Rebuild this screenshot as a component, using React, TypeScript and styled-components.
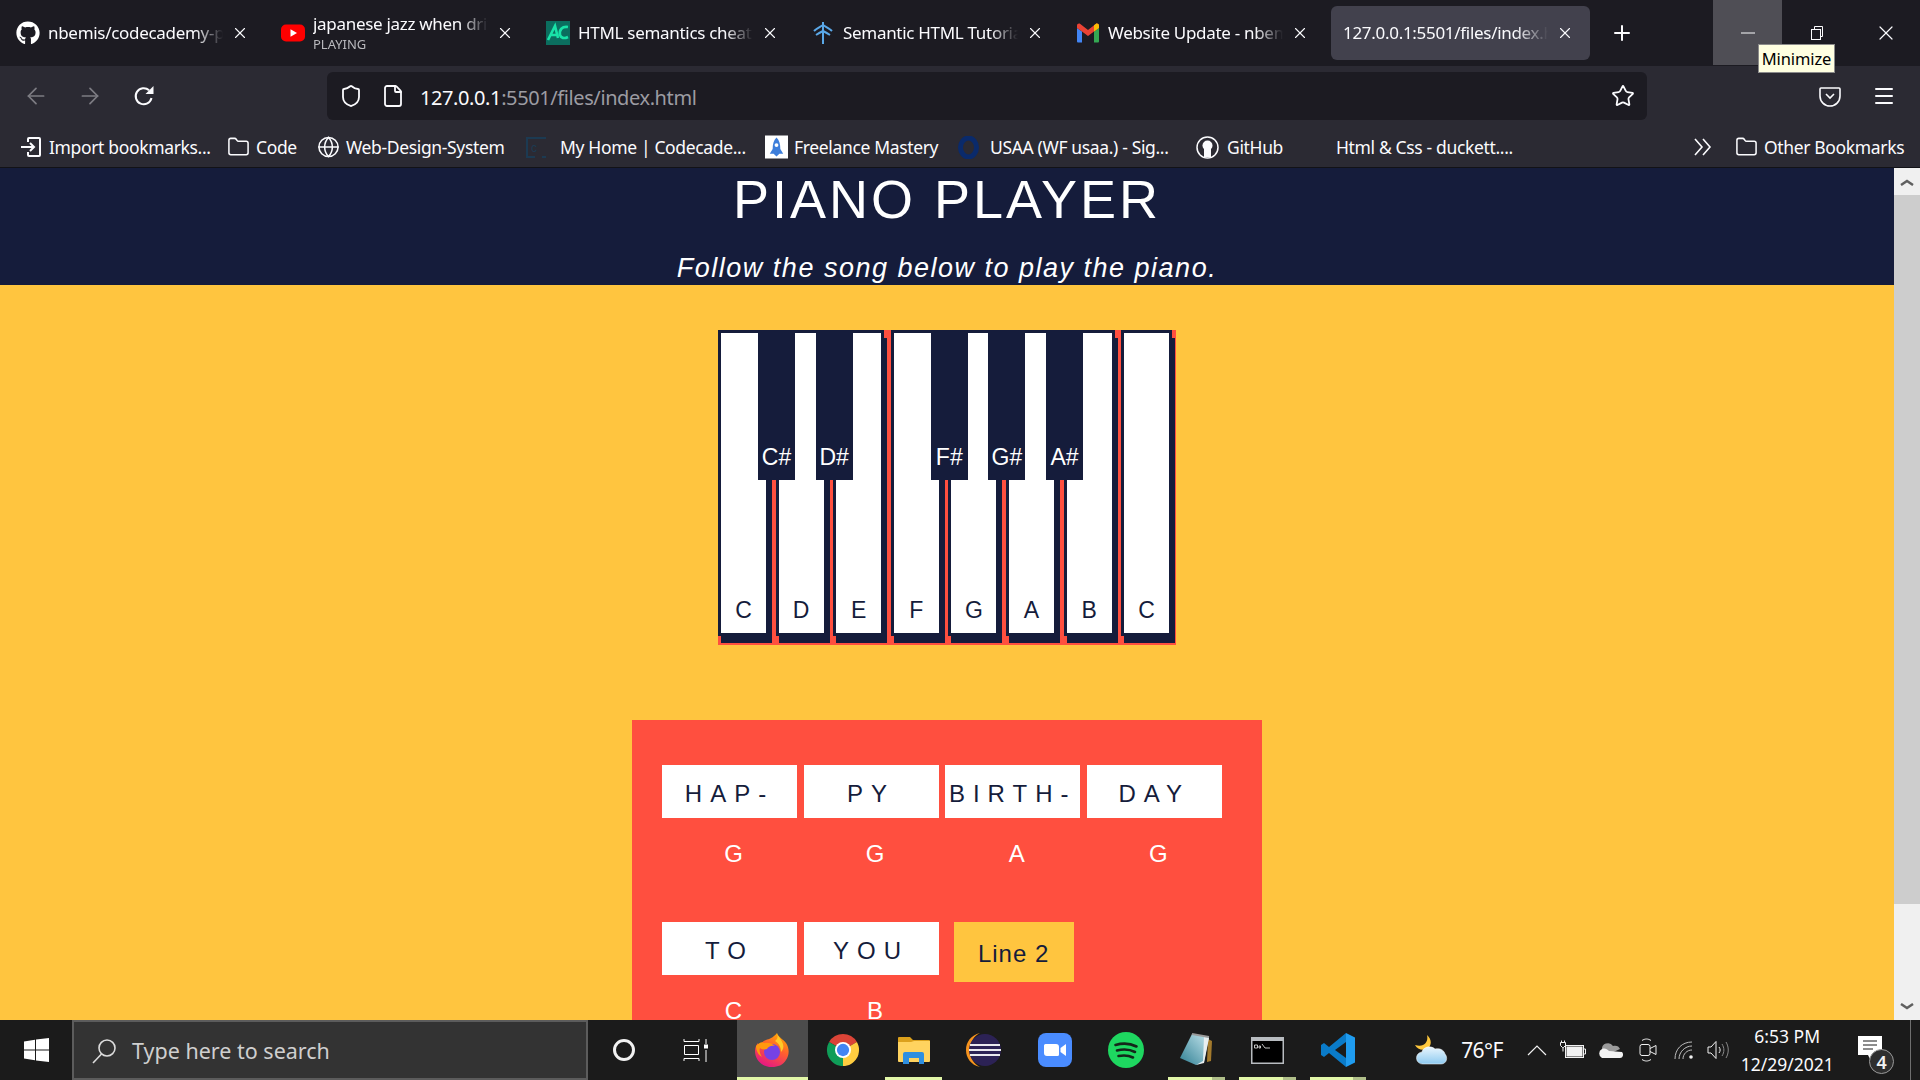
import React from 'react'
import styled, { createGlobalStyle } from 'styled-components'
import { ArrowLeft, ArrowRight, File, Folder, Globe, Menu, Plus, Shield, Star, X } from 'lucide-react'
import { FaGithub } from 'react-icons/fa'

const NAVY = '#151c3b'
const YELLOW = '#ffc53f'
const RED = '#ff4f3f'
const UI_FONT = '"Noto Sans", "Open Sans", sans-serif'
const PAGE_FONT = '"Liberation Sans", Arial, sans-serif'

const GlobalStyle = createGlobalStyle`
  html, body {
    margin: 0;
    height: 100%;
    overflow: hidden;
    background: #1c1b22;
  }
  * {
    box-sizing: border-box;
  }
`

const Desktop = styled.div`
  width: 1920px;
  height: 1080px;
  display: flex;
  flex-direction: column;
  font-family: ${UI_FONT};
  color: #fbfbfe;
`

/* browser chrome */
const TabBar = styled.div`
  position: relative;
  height: 66px;
  flex: none;
  display: flex;
  gap: 6px;
  padding-left: 6px;
  background: #1c1b22;
`

const Tab = styled.div<{ $active?: boolean }>`
  width: 259px;
  height: 54px;
  margin-top: 6px;
  display: flex;
  align-items: center;
  gap: 8px;
  padding: 0 16px 0 ${(p) => (p.$active ? 12 : 10)}px;
  border-radius: 6px;
  background: ${(p) => (p.$active ? '#42414d' : 'transparent')};
`

const Favicon = styled.span`
  width: 24px;
  height: 24px;
  flex: none;
  display: flex;
  align-items: center;
  justify-content: center;
`

const TabText = styled.div`
  flex: 1;
  min-width: 0;
  overflow: hidden;
  white-space: nowrap;
  -webkit-mask-image: linear-gradient(to right, #000 84%, transparent 100%);
  mask-image: linear-gradient(to right, #000 84%, transparent 100%);
`

const TabTitle = styled.div`
  font-size: 17px;
  line-height: 24px;
  letter-spacing: -0.3px;
`

const TabStatus = styled.div`
  font-size: 13px;
  line-height: 16px;
  margin-bottom: 2px;
  color: #b9b9bd;
`

const NewTab = styled.div`
  width: 52px;
  display: flex;
  align-items: center;
  justify-content: center;
`

const WindowControls = styled.div`
  margin-left: auto;
  display: flex;
`

const WindowButton = styled.div<{ $hover?: boolean }>`
  width: 69px;
  height: 65px;
  display: flex;
  align-items: center;
  justify-content: center;
  background: ${(p) => (p.$hover ? '#4f4e55' : 'transparent')};
`

const Tooltip = styled.div`
  position: absolute;
  left: 1758px;
  top: 44px;
  width: 77px;
  height: 29px;
  z-index: 5;
  display: flex;
  align-items: center;
  justify-content: center;
  background: #ffffe1;
  border: 1px solid #8b8b8b;
  color: #000;
  font-size: 16.5px;
  letter-spacing: -0.1px;
`

const Toolbar = styled.div`
  height: 64px;
  flex: none;
  display: flex;
  padding: 6px 9px 0;
  background: #2b2a33;
`

const NavButton = styled.div<{ $slot?: number }>`
  width: ${(p) => p.$slot ?? 54}px;
  height: 48px;
  display: flex;
  align-items: center;
  justify-content: center;
`

const UrlBar = styled.div`
  width: 1320px;
  height: 48px;
  margin-left: 156px;
  margin-right: auto;
  display: flex;
  align-items: center;
  padding: 0 12px;
  gap: 18px;
  border-radius: 6px;
  background: #1c1b22;
`

const UrlText = styled.div`
  flex: 1;
  margin-left: -3px;
  padding-top: 2px;
  font-size: 20px;
  letter-spacing: -0.4px;
  color: #fbfbfe;
  span {
    color: #9c9ca2;
  }
`

const BookmarksBar = styled.div`
  height: 38px;
  flex: none;
  display: flex;
  align-items: center;
  padding: 0 0 3px 19px;
  background: #2b2a33;
  border-bottom: 1px solid #121217;
`

const Bookmark = styled.div<{ $width: number; $gap?: number }>`
  width: ${(p) => p.$width}px;
  flex: none;
  display: flex;
  align-items: center;
  gap: ${(p) => p.$gap ?? 7}px;
  font-size: 17.5px;
  letter-spacing: -0.35px;
  white-space: nowrap;
`

const BookmarkIcon = styled.span`
  width: 23px;
  height: 23px;
  flex: none;
  display: flex;
  align-items: center;
  justify-content: center;
`

const OverflowButton = styled.div`
  width: 26px;
  display: flex;
  justify-content: center;
  margin-right: 19px;
`

/* page */
const Viewport = styled.div`
  flex: 1;
  min-height: 0;
  display: flex;
  overflow: hidden;
`

const Page = styled.main`
  flex: 1;
  min-width: 0;
  background: ${YELLOW};
  font-family: ${PAGE_FONT};
`

const Header = styled.header`
  height: 117px;
  background: ${NAVY};
  color: #fff;
  text-align: center;
`

const Title = styled.h1`
  margin: 0 0 21px;
  font-size: 54px;
  font-weight: 400;
  line-height: 62px;
  letter-spacing: 3px;
`

const Subtitle = styled.p`
  margin: 0;
  font-size: 27px;
  font-style: italic;
  line-height: 34px;
  letter-spacing: 1.5px;
`

const Keyboard = styled.div`
  width: 458px;
  margin: 45px auto 0;
  display: flex;
  padding-bottom: 2px;
  background: ${RED};
`

const WhiteKey = styled.div`
  position: relative;
  width: 54px;
  height: 313px;
  flex: none;
  margin-right: 3.6px;
  display: flex;
  align-items: flex-end;
  justify-content: center;
  padding-bottom: 11px;
  background: #fff;
  border-style: solid;
  border-color: ${NAVY};
  border-width: 3px 6px 10px 3px;
  color: ${NAVY};
  font-size: 23px;
  line-height: 24px;

  &:last-child {
    margin-right: 0;
  }
  &::before {
    content: '';
    position: absolute;
    top: -3px;
    right: -6px;
    width: 3px;
    height: 8px;
    background: ${RED};
  }
  &::after {
    content: '';
    position: absolute;
    left: -3px;
    bottom: -10px;
    width: 3px;
    height: 7px;
    background: ${RED};
  }
`

const BlackKey = styled.div`
  position: absolute;
  z-index: 1;
  top: -3px;
  left: 37px;
  width: 37px;
  height: 150px;
  display: flex;
  align-items: flex-end;
  justify-content: center;
  padding-bottom: 11px;
  background: ${NAVY};
  color: #fff;
  white-space: nowrap;
`

const Song = styled.section`
  width: 630px;
  margin: 75px auto 0;
  padding: 45px 30px 60px;
  background: ${RED};
`

const LyricRow = styled.div`
  display: flex;
  align-items: flex-start;
  gap: 6.6px;
  height: 52.5px;
`

const Lyric = styled.div`
  width: 135px;
  height: 52.5px;
  padding-top: 5px;
  display: flex;
  align-items: center;
  justify-content: center;
  background: #fff;
  color: ${NAVY};
  font-size: 24px;
  letter-spacing: 8px;
  white-space: nowrap;
`

const LineBadge = styled.div`
  width: 120px;
  height: 60px;
  flex: none;
  margin-left: 8.4px;
  padding-top: 3px;
  display: flex;
  align-items: center;
  justify-content: center;
  background: ${YELLOW};
  color: ${NAVY};
  font-size: 24px;
  letter-spacing: 1px;
`

const NoteRow = styled.div`
  display: flex;
  gap: 6.6px;
  height: 72px;
  margin-bottom: 32.5px;
`

const Note = styled.div`
  width: 135px;
  padding-left: 8px;
  text-align: center;
  color: #fff;
  font-size: 24px;
  line-height: 72px;
`

const Scrollbar = styled.aside`
  width: 26px;
  flex: none;
  display: flex;
  flex-direction: column;
  background: #f0f0f0;
`

const ScrollArrow = styled.div<{ $bottom?: boolean }>`
  height: 27px;
  display: flex;
  align-items: center;
  justify-content: center;
  margin-top: ${(p) => (p.$bottom ? 'auto' : 0)};
`

const ScrollThumb = styled.div`
  height: 709px;
  background: #cdcdcd;
`

/* taskbar */
const Taskbar = styled.footer`
  height: 60px;
  flex: none;
  display: flex;
  background: #1b1b1b;
`

const StartButton = styled.div`
  width: 72px;
  display: flex;
  align-items: center;
  justify-content: center;
`

const SearchBox = styled.div`
  width: 516px;
  display: flex;
  align-items: center;
  gap: 15px;
  padding: 1px 0 0 17px;
  background: #333333;
  border: 2px solid #5c5c5c;
  font-size: 21.5px;
  color: #cfcfcf;
`

const TaskSlot = styled.div<{ $end?: boolean }>`
  width: 72px;
  display: flex;
  align-items: center;
  justify-content: center;
  margin-right: ${(p) => (p.$end ? 5 : 0)}px;
`

const TaskApp = styled.div<{ $state?: 'active' | 'open' | 'stacked' }>`
  position: relative;
  width: 70.7px;
  display: flex;
  align-items: center;
  justify-content: center;
  background: ${(p) => (p.$state === 'active' ? '#4c4c4c' : 'transparent')};

  &::after {
    content: '';
    display: ${(p) => (p.$state ? 'block' : 'none')};
    position: absolute;
    bottom: 0;
    height: 3px;
    left: ${(p) => (p.$state === 'active' ? 0 : 7)}px;
    right: ${(p) => (p.$state === 'active' ? 0 : 7)}px;
    background: ${(p) =>
      p.$state === 'stacked'
        ? 'linear-gradient(to right, #e2f7a8 77%, #b0bf8a 77%)'
        : '#e2f7a8'};
  }
`

const Tray = styled.div`
  flex: 1;
  display: flex;
  padding-left: 41px;
`

const Temperature = styled.div`
  margin-left: 13px;
  width: 58px;
  align-self: center;
  font-size: 21px;
  letter-spacing: -0.6px;
`

const TrayIcon = styled.div<{ $width: number }>`
  width: ${(p) => p.$width}px;
  display: flex;
  align-items: center;
  justify-content: center;
`

const Clock = styled.div`
  width: 104px;
  display: flex;
  flex-direction: column;
  align-items: center;
  justify-content: center;
  gap: 5px;
  font-size: 17.5px;
  line-height: 23px;
  white-space: nowrap;
`

const NotificationSlot = styled.div`
  position: relative;
  width: 71px;
  display: flex;
  align-items: center;
  justify-content: center;
  padding: 0 10px 4px 0;
`

const Badge = styled.div`
  position: absolute;
  left: 30px;
  top: 29px;
  width: 25px;
  height: 25px;
  display: flex;
  align-items: center;
  justify-content: center;
  border-radius: 50%;
  background: #2e2e2e;
  border: 1px solid #9a9a9a;
  font-size: 18px;
  font-weight: 600;
  color: #f2f2f2;
`

const ShowDesktop = styled.div`
  width: 8px;
  border-left: 1px solid #6e6e6e;
`

/* icons */
const YouTubeIcon = () => (
  <svg width="24" height="18" viewBox="0 0 24 18">
    <rect width="24" height="17" y="0.5" rx="5" fill="#f00" />
    <path d="M9.5 5.2 16 9l-6.5 3.8z" fill="#fff" />
  </svg>
)

const CodecademyIcon = () => (
  <svg width="24" height="24" viewBox="0 0 24 24">
    <rect width="24" height="24" fill="#0b6e5f" />
    <path d="M2 19 9 5l3 12M4 14h7M22 6c-6-1-9 3-8 8 1 3 4 4 8 2" fill="none" stroke="#19e3a8" strokeWidth="2.6" />
  </svg>
)

const TreeIcon = () => (
  <svg width="24" height="24" viewBox="0 0 24 24" fill="none" stroke="#5aa8e8" strokeWidth="2">
    <path d="M12 1v22" />
    <path d="M3 10c3-3 6-4 9-6 3 2 6 3 9 6M5 14c3-2 5-3 7-4 2 1 4 2 7 4" />
  </svg>
)

const GmailIcon = () => (
  <svg width="24" height="20" viewBox="0 0 24 20">
    <path d="M1 18.5V5l5 3.5v11H2a1 1 0 0 1-1-1z" fill="#4285f4" />
    <path d="M18 19.5v-11L23 5v13.5a1 1 0 0 1-1 1z" fill="#34a853" />
    <path d="M1 2.5C1 .8 3 0 4.300 1L12 7l7.700-6C21 0 23 .8 23 2.500V5l-5 3.500-6 4.500-6-4.500L1 5z" fill="#ea4335" />
    <path d="M18 8.500V2.300l1.700-1.300C21 0 23 .8 23 2.500V5z" fill="#fbbc04" />
  </svg>
)

const ReloadIcon = () => (
  <svg width="24" height="24" viewBox="0 0 24 24">
    <path d="M19.500 14a8 8 0 1 1-2.400-7.700" fill="none" stroke="#fbfbfe" strokeWidth="2" />
    <path d="M21.500 2v8h-8z" fill="#fbfbfe" />
  </svg>
)

const PocketIcon = () => (
  <svg width="22" height="22" viewBox="0 0 22 22" fill="none" stroke="#fbfbfe" strokeWidth="1.6">
    <path d="M2 3h18a1 1 0 0 1 1 1v7a10 10 0 0 1-20 0V4a1 1 0 0 1 1-1z" />
    <path d="m7 9 4 4 4-4" />
  </svg>
)

const RestoreIcon = () => (
  <svg width="16" height="16" viewBox="0 0 16 16" fill="none" stroke="#fbfbfe" strokeWidth="1">
    <rect x="2.500" y="4.500" width="9" height="10" />
    <path d="M5.500 4.500v-3h8v10h-2" />
  </svg>
)

const ImportIcon = () => (
  <svg width="22" height="22" viewBox="0 0 22 22" fill="none" stroke="#fbfbfe" strokeWidth="2">
    <path d="M8 6V3a1 1 0 0 1 1-1h10a1 1 0 0 1 1 1v16a1 1 0 0 1-1 1H9a1 1 0 0 1-1-1v-3" />
    <path d="M1 11h12M10 7l4 4-4 4" />
  </svg>
)

const OverflowChevrons = () => (
  <svg width="20" height="18" viewBox="0 0 20 18" fill="none" stroke="#fbfbfe" strokeWidth="1.600">
    <path d="M2 1l7 8-7 8M10 1l7 8-7 8" />
  </svg>
)

const CodecademyBookmarkIcon = () => (
  <svg width="23" height="23" viewBox="0 0 23 23">
    <path d="M21 2H2v19h8M21 21h-4" fill="none" stroke="#1c3a52" strokeWidth="2" />
    <text x="6" y="16" fontSize="12" fontFamily={PAGE_FONT} fill="#1c3a52">c</text>
  </svg>
)

const RocketIcon = () => (
  <svg width="24" height="24" viewBox="0 0 24 24">
    <rect width="24" height="24" fill="#fff" />
    <path d="M12 2c3 3 4 7 4 12l3 5h-4l-3 3-3-3H5l3-5c0-5 1-9 4-12z" fill="#3d7edb" />
    <circle cx="12" cy="10" r="2" fill="#fff" />
  </svg>
)

const UsaaIcon = () => (
  <svg width="23" height="23" viewBox="0 0 23 23">
    <ellipse cx="11.500" cy="11.500" rx="8" ry="9.500" fill="none" stroke="#0a2a6b" strokeWidth="5" />
  </svg>
)

const GithubBookmarkIcon = () => (
  <svg width="23" height="23" viewBox="0 0 23 23">
    <circle cx="11.500" cy="11.500" r="10.500" fill="#2b2a33" stroke="#fbfbfe" strokeWidth="1.500" />
    <circle cx="11.500" cy="9.500" r="5" fill="#fbfbfe" />
    <path d="M8 13h7v8H8z" fill="#fbfbfe" />
  </svg>
)

const WindowsLogo = () => (
  <svg width="25" height="24" viewBox="0 0 25 24" fill="#fff">
    <path d="M0 3.400 11 1.800V11.400H0zM12 1.600 25 0V11.400H12zM0 12.600H11V22.200L0 20.600zM12 12.600H25V24L12 22.400z" />
  </svg>
)

const SearchLens = () => (
  <svg width="26" height="26" viewBox="0 0 26 26" fill="none" stroke="#dcdcdc" strokeWidth="1.600">
    <circle cx="16" cy="10" r="8" />
    <path d="M10.500 16 2 25" />
  </svg>
)

const CortanaIcon = () => (
  <svg width="24" height="24" viewBox="0 0 24 24">
    <circle cx="12" cy="12" r="9.500" fill="none" stroke="#f2f2f2" strokeWidth="3" />
  </svg>
)

const TaskViewIcon = () => (
  <svg width="26" height="24" viewBox="0 0 26 24" fill="none" stroke="#fff" strokeWidth="1">
    <path d="M1 3.500h15M1 3.500V1M16 3.500V1M1.500 7.500h14v9h-14zM1 20.500h15M1 20.500V23M16 20.500V23M23 1v5M23 12v12" />
    <rect x="21.500" y="7" width="3" height="3" fill="#fff" />
  </svg>
)

const FirefoxIcon = () => (
  <svg width="36" height="36" viewBox="0 0 36 36">
    <defs>
      <linearGradient id="fxBody" x1="0.800" y1="0" x2="0.300" y2="1">
        <stop offset="0" stopColor="#ffb000" />
        <stop offset="0.450" stopColor="#ff5f2e" />
        <stop offset="1" stopColor="#e31587" />
      </linearGradient>
    </defs>
    <path d="M23 1c1 4 6 6 9 10 4 6 3 13 0 17-3 5-8 7-14 7C8 35 1 28 1 19c0-3 1-6 3-8 0 2 1 3 2 3 1-3 3-5 6-6 3-1 7-2 11-7z" fill="url(#fxBody)" />
    <circle cx="18" cy="20" r="8" fill="#7542e5" />
    <path d="M2 14c3-3 6-5 8-3 4-1 8 0 11 3-4-1-7 1-8 3-3 1-6 0-7-1-1 2 0 6 2 9-4-2-6-7-6-11z" fill="#ff980e" />
    <path d="M23 1c1 4 5 7 6 11 1 3 0 6-2 8 0-6-3-9-6-11 3-2 3-5 2-8z" fill="#ffca28" />
  </svg>
)

const ChromeIcon = () => (
  <svg width="34" height="34" viewBox="0 0 36 36">
    <path d="M18 18 3.300 9.500A17 17 0 0 1 32.700 9.500z" fill="#db4437" />
    <path d="M18 18 3.300 9.500A17 17 0 0 0 18 35z" fill="#0f9d58" />
    <path d="M18 18 32.700 9.500A17 17 0 0 1 18 35z" fill="#ffcd40" />
    <circle cx="18" cy="18" r="8.500" fill="#fff" />
    <circle cx="18" cy="18" r="6.500" fill="#4285f4" />
  </svg>
)

const ExplorerIcon = () => (
  <svg width="32" height="28" viewBox="0 0 32 28">
    <path d="M0 2a1 1 0 0 1 1-1h11l3 3h16a1 1 0 0 1 1 1v4H0z" fill="#dca11c" />
    <path d="M0 6h13l3-1h16v20a1 1 0 0 1-1 1H1a1 1 0 0 1-1-1z" fill="#ffd35f" />
    <path d="M5 28V18a2 2 0 0 1 2-2h17a2 2 0 0 1 2 2v10h-5v-6H11v6z" fill="#2f8fe0" />
  </svg>
)

const EclipseIcon = () => (
  <svg width="36" height="34" viewBox="0 0 36 34">
    <path d="M14 0C5 2 0 9 0 17s5 15 14 17c-6-3-10-9-10-17S8 3 14 0z" fill="#f7941e" />
    <circle cx="19" cy="17" r="16" fill="#2c2255" />
    <path d="M4 12h30M3 17h32M4 22h30" stroke="#fff" strokeWidth="2" opacity="0.900" />
  </svg>
)

const ZoomIcon = () => (
  <svg width="34" height="34" viewBox="0 0 34 34">
    <rect width="34" height="34" rx="8" fill="#4a8cff" />
    <path d="M6 12.500a1.500 1.500 0 0 1 1.500-1.500H18a3 3 0 0 1 3 3v7.500a1.500 1.500 0 0 1-1.500 1.500H9a3 3 0 0 1-3-3zM22.500 15l5.500-4v12l-5.500-4z" fill="#fff" />
  </svg>
)

const SpotifyIcon = () => (
  <svg width="36" height="36" viewBox="0 0 36 36">
    <circle cx="18" cy="18" r="18" fill="#1ed760" />
    <path d="M7.500 13c7-2 15-1.500 21 1.500M9 18.500c6-1.500 13-1 18 1.500M10.500 24c5-1 10-.8 14.500 1.500" fill="none" stroke="#14261a" strokeWidth="2.600" strokeLinecap="round" />
  </svg>
)

const NotepadIcon = () => (
  <svg width="34" height="34" viewBox="0 0 34 34">
    <defs>
      <linearGradient id="padFace" x1="0" y1="1" x2="1" y2="0">
        <stop offset="0" stopColor="#2f7f93" />
        <stop offset="1" stopColor="#c5e6ee" />
      </linearGradient>
    </defs>
    <path d="M29 6l4 2-1 20-4 1z" fill="#a37a2c" />
    <path d="M13 1l17 3-5 25-8 3L1 25z" fill="url(#padFace)" />
    <path d="M25 4l5 1-5 25-8 2 7-4z" fill="#e9eff0" />
    <path d="M13 1l17 3" stroke="#9a9a9a" strokeWidth="2" />
  </svg>
)

const ConsoleIcon = () => (
  <svg width="33" height="27" viewBox="0 0 33 27">
    <rect width="33" height="27" fill="#b8bcc0" />
    <rect x="1.500" y="4" width="30" height="21.500" fill="#000" />
    <path d="M3.500 8h3v3h-3zM8 9h1.500v2H8zM11 7l3 4h5" stroke="#d8d8d8" strokeWidth="0.900" fill="none" />
  </svg>
)

const VSCodeIcon = () => (
  <svg width="36" height="36" viewBox="0 0 36 36">
    <path d="M26 1 35 5.500V30.500L26 35z" fill="#1f9cf0" />
    <path d="M26 1V10L15 18 26 26V35L9 21 4 25 1 23V13L4 11 9 15z" fill="#0a7bc9" />
  </svg>
)

const WeatherIcon = () => (
  <svg width="34" height="30" viewBox="0 0 34 30">
    <defs>
      <linearGradient id="cloud" x1="0" y1="0" x2="0" y2="1">
        <stop offset="0" stopColor="#e9f6fe" />
        <stop offset="1" stopColor="#8ecaf0" />
      </linearGradient>
    </defs>
    <path d="M13 0c1 4 0 8-4 10-2 1-5 1-8 0 2 4 7 6 12 4 5-3 5-10 0-14z" fill="#ffc83d" />
    <path d="M9 29a6 6 0 0 1-1-12c1-5 9-7 13-3 5-1 9 1 10 5 3 3 2 10-4 10z" fill="url(#cloud)" stroke="#fff" strokeWidth="0.500" />
  </svg>
)

const CaretUpIcon = () => (
  <svg width="20" height="12" viewBox="0 0 20 12" fill="none" stroke="#f2f2f2" strokeWidth="1.200">
    <path d="M1 11 10 2l9 9" />
  </svg>
)

const BatteryIcon = () => (
  <svg width="26" height="20" viewBox="0 0 26 20" fill="none" stroke="#f2f2f2" strokeWidth="1">
    <rect x="5.500" y="5.500" width="18" height="12" />
    <rect x="7" y="7" width="15" height="9" fill="#f2f2f2" />
    <path d="M24 9h1.500v5H24" />
    <path d="M1.500 2.500v-2M4.500 2.500v-2M.5 2.500h5v3l-2 2h-1l-2-2zM3 7.500v4" />
  </svg>
)

const OneDriveIcon = () => (
  <svg width="26" height="16" viewBox="0 0 26 16">
    <path d="M5 8a6 6 0 0 1 11-4c3-1 6 0 7 3L12 12z" fill="#9a9a9a" />
    <path d="M5 16a5 5 0 0 1 0-9c3-1 5 0 7 2l13 1c2 2 1 6-2 6z" fill="#f2f2f2" />
  </svg>
)

const MeetIcon = () => (
  <svg width="18" height="24" viewBox="0 0 18 24" fill="none" stroke="#f2f2f2" strokeWidth="1">
    <rect x="1" y="6.500" width="10" height="11" rx="2" />
    <path d="M11 10.500l6-3v9l-6-3M3 2.500c3-2 6-2 9 0M3 21.500c3 2 6 2 9 0" />
  </svg>
)

const WifiIcon = () => (
  <svg width="20" height="20" viewBox="0 0 20 20" fill="none" stroke="#bdbdbd" strokeWidth="1">
    <path d="M1 19C1 9 8 2 18 2M5 19c0-7 6-13 13-13M9 19c0-5 4-9 9-9" />
    <circle cx="17" cy="17" r="1.800" fill="#f2f2f2" stroke="none" />
  </svg>
)

const SpeakerIcon = () => (
  <svg width="23" height="20" viewBox="0 0 23 20" fill="none" stroke="#f2f2f2" strokeWidth="1">
    <path d="M1 7h3l5-5.500v17L4 13H1z" />
    <path d="M12 7c1.500 2 1.500 4 0 6" />
    <path d="M15 4c2.500 4 2.500 8 0 12M19 2c3 5 3 11 0 16" stroke="#8a8a8a" />
  </svg>
)

const NotificationIcon = () => (
  <svg width="24" height="24" viewBox="0 0 24 24">
    <path d="M0 0h24v19H14l-2 4-2-4H0z" fill="#fff" />
    <path d="M5 5h14M5 9h14M5 13h10" stroke="#1b1b1b" strokeWidth="1" />
  </svg>
)

const ScrollChevron = ({ down }: { down?: boolean }) => (
  <svg width="14" height="8" viewBox="0 0 14 8">
    <path d={down ? 'M1 1l6 4 6-4' : 'M1 7l6-4 6 4'} fill="none" stroke="#606060" strokeWidth="2.500" />
  </svg>
)

/* data */
const tabs = [
  { title: 'nbemis/codecademy-piano-player', icon: <FaGithub size={24} color="#fff" /> },
  { title: 'japanese jazz when driving', status: 'PLAYING', icon: <YouTubeIcon /> },
  { title: 'HTML semantics cheat sheet', icon: <CodecademyIcon /> },
  { title: 'Semantic HTML Tutorial for', icon: <TreeIcon /> },
  { title: 'Website Update - nbemis@', icon: <GmailIcon /> },
  { title: '127.0.0.1:5501/files/index.html', active: true },
]

const bookmarks = [
  { label: 'Import bookmarks...', width: 208, icon: <ImportIcon /> },
  { label: 'Code', width: 90, gap: 6, icon: <Folder size={24} strokeWidth={1.6} /> },
  { label: 'Web-Design-System', width: 208, gap: 6, icon: <Globe size={24} strokeWidth={1.6} /> },
  { label: 'My Home | Codecade...', width: 240, gap: 12, icon: <CodecademyBookmarkIcon /> },
  { label: 'Freelance Mastery', width: 192, gap: 6, icon: <RocketIcon /> },
  { label: 'USAA (WF usaa.) - Sig...', width: 239, gap: 10, icon: <UsaaIcon /> },
  { label: 'GitHub', width: 140, gap: 8, icon: <GithubBookmarkIcon /> },
]

const keys = [
  { note: 'C', sharp: 'C#' },
  { note: 'D', sharp: 'D#' },
  { note: 'E' },
  { note: 'F', sharp: 'F#' },
  { note: 'G', sharp: 'G#' },
  { note: 'A', sharp: 'A#' },
  { note: 'B' },
  { note: 'C' },
]

const taskApps: { id: string; icon: React.ReactNode; state?: 'active' | 'open' | 'stacked' }[] = [
  { id: 'firefox', icon: <FirefoxIcon />, state: 'active' },
  { id: 'chrome', icon: <ChromeIcon /> },
  { id: 'explorer', icon: <ExplorerIcon />, state: 'open' },
  { id: 'eclipse', icon: <EclipseIcon /> },
  { id: 'zoom', icon: <ZoomIcon /> },
  { id: 'spotify', icon: <SpotifyIcon /> },
  { id: 'notepad', icon: <NotepadIcon />, state: 'stacked' },
  { id: 'console', icon: <ConsoleIcon />, state: 'stacked' },
  { id: 'vscode', icon: <VSCodeIcon />, state: 'stacked' },
]

export default function App() {
  return (
    <Desktop>
      <GlobalStyle />
      <TabBar>
        {tabs.map((tab) => (
          <Tab key={tab.title} $active={tab.active}>
            {tab.icon && <Favicon>{tab.icon}</Favicon>}
            <TabText>
              <TabTitle>{tab.title}</TabTitle>
              {tab.status && <TabStatus>{tab.status}</TabStatus>}
            </TabText>
            <X size={18} strokeWidth={1.5} color="#fbfbfe" />
          </Tab>
        ))}
        <NewTab>
          <Plus size={24} strokeWidth={2} color="#fbfbfe" />
        </NewTab>
        <WindowControls>
          <WindowButton $hover>
            <svg width="14" height="2" viewBox="0 0 14 2">
              <path d="M0 1h14" stroke="#fbfbfe" strokeWidth="1" />
            </svg>
          </WindowButton>
          <WindowButton>
            <RestoreIcon />
          </WindowButton>
          <WindowButton>
            <X size={24} strokeWidth={1.2} color="#fbfbfe" />
          </WindowButton>
        </WindowControls>
        <Tooltip>Minimize</Tooltip>
      </TabBar>

      <Toolbar>
        <NavButton>
          <ArrowLeft size={26} strokeWidth={1.6} color="#7d7c83" />
        </NavButton>
        <NavButton>
          <ArrowRight size={26} strokeWidth={1.6} color="#7d7c83" />
        </NavButton>
        <NavButton>
          <ReloadIcon />
        </NavButton>
        <UrlBar>
          <Shield size={24} strokeWidth={1.8} color="#fbfbfe" />
          <File size={24} strokeWidth={1.8} color="#fbfbfe" />
          <UrlText>
            127.0.0.1<span>:5501/files/index.html</span>
          </UrlText>
          <Star size={24} strokeWidth={1.8} color="#fbfbfe" />
        </UrlBar>
        <NavButton $slot={55}>
          <PocketIcon />
        </NavButton>
        <NavButton>
          <Menu size={24} strokeWidth={2} color="#fbfbfe" />
        </NavButton>
      </Toolbar>

      <BookmarksBar>
        {bookmarks.map((item) => (
          <Bookmark key={item.label} $width={item.width} $gap={item.gap}>
            <BookmarkIcon>{item.icon}</BookmarkIcon>
            {item.label}
          </Bookmark>
        ))}
        <Bookmark $width={354}>Html &amp; Css - duckett....</Bookmark>
        <OverflowButton>
          <OverflowChevrons />
        </OverflowButton>
        <Bookmark $width={165} $gap={6}>
          <BookmarkIcon>
            <Folder size={24} strokeWidth={1.6} />
          </BookmarkIcon>
          Other Bookmarks
        </Bookmark>
      </BookmarksBar>

      <Viewport>
        <Page>
          <Header>
            <Title>PIANO PLAYER</Title>
            <Subtitle>Follow the song below to play the piano.</Subtitle>
          </Header>
          <Keyboard>
            {keys.map((key, index) => (
              <WhiteKey key={index}>
                {key.note}
                {key.sharp && <BlackKey>{key.sharp}</BlackKey>}
              </WhiteKey>
            ))}
          </Keyboard>
          <Song>
            <LyricRow>
              <Lyric>HAP-</Lyric>
              <Lyric>PY</Lyric>
              <Lyric>BIRTH-</Lyric>
              <Lyric>DAY</Lyric>
            </LyricRow>
            <NoteRow>
              <Note>G</Note>
              <Note>G</Note>
              <Note>A</Note>
              <Note>G</Note>
            </NoteRow>
            <LyricRow>
              <Lyric>TO</Lyric>
              <Lyric>YOU</Lyric>
              <LineBadge>Line 2</LineBadge>
            </LyricRow>
            <NoteRow>
              <Note>C</Note>
              <Note>B</Note>
            </NoteRow>
          </Song>
        </Page>
        <Scrollbar>
          <ScrollArrow>
            <ScrollChevron />
          </ScrollArrow>
          <ScrollThumb />
          <ScrollArrow $bottom>
            <ScrollChevron down />
          </ScrollArrow>
        </Scrollbar>
      </Viewport>

      <Taskbar>
        <StartButton>
          <WindowsLogo />
        </StartButton>
        <SearchBox>
          <SearchLens />
          Type here to search
        </SearchBox>
        <TaskSlot>
          <CortanaIcon />
        </TaskSlot>
        <TaskSlot $end>
          <TaskViewIcon />
        </TaskSlot>
        {taskApps.map((app) => (
          <TaskApp key={app.id} $state={app.state}>
            {app.icon}
          </TaskApp>
        ))}
        <Tray>
          <TrayIcon $width={34}>
            <WeatherIcon />
          </TrayIcon>
          <Temperature>76°F</Temperature>
          <TrayIcon $width={36}>
            <CaretUpIcon />
          </TrayIcon>
          <TrayIcon $width={36}>
            <BatteryIcon />
          </TrayIcon>
          <TrayIcon $width={38}>
            <OneDriveIcon />
          </TrayIcon>
          <TrayIcon $width={37}>
            <MeetIcon />
          </TrayIcon>
          <TrayIcon $width={36}>
            <WifiIcon />
          </TrayIcon>
          <TrayIcon $width={33}>
            <SpeakerIcon />
          </TrayIcon>
          <Clock>
            <span>6:53 PM</span>
            <span>12/29/2021</span>
          </Clock>
          <NotificationSlot>
            <NotificationIcon />
            <Badge>4</Badge>
          </NotificationSlot>
          <ShowDesktop />
        </Tray>
      </Taskbar>
    </Desktop>
  )
}
